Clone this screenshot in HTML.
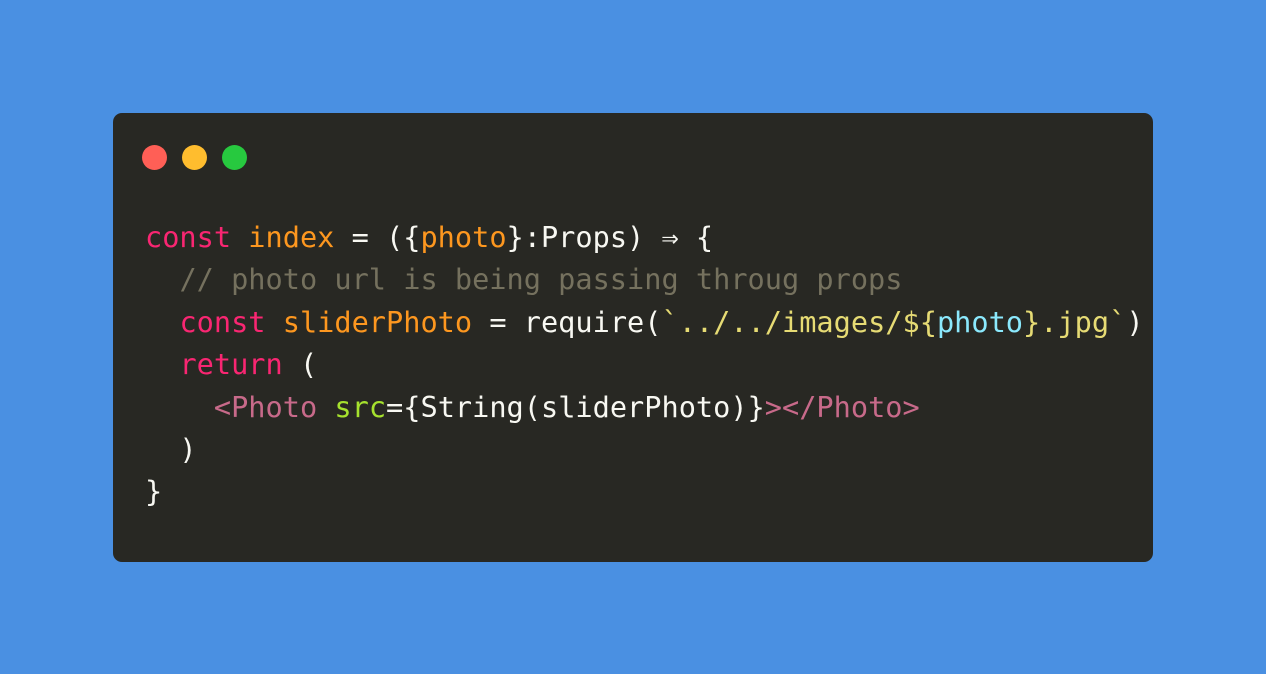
<!DOCTYPE html>
<html><head><style>
html,body{margin:0;padding:0;width:1266px;height:674px;background:#4a90e2;overflow:hidden}
.win{position:absolute;left:113px;top:113px;width:1040px;height:449px;background:#282823;border-radius:9px}
.dot{position:absolute;top:145px;width:25px;height:25px;border-radius:50%}
pre{position:absolute;left:145px;top:216px;margin:0;font-family:"DejaVu Sans Mono","Liberation Mono",monospace;font-size:28.6px;line-height:42.4px;color:#f8f8f2;letter-spacing:0}
.k{color:#f92672}.o{color:#fd971f}.c{color:#75715e}.s{color:#e6db74}.cy{color:#8be9fd}.t{color:#c86a8a}.g{color:#a6e22e}
</style></head><body>
<div class="win"></div>
<div class="dot" style="left:142px;background:#ff5f56"></div>
<div class="dot" style="left:182px;background:#ffbd2e"></div>
<div class="dot" style="left:222px;background:#27c93f"></div>
<pre><span class="k">const</span> <span class="o">index</span> = ({<span class="o">photo</span>}:Props) ⇒ {
  <span class="c">// photo url is being passing throug props</span>
  <span class="k">const</span> <span class="o">sliderPhoto</span> = require(<span class="s">`../../images/${</span><span class="cy">photo</span><span class="s">}.jpg`</span>)
  <span class="k">return</span> (
    <span class="t">&lt;Photo</span> <span class="g">src</span>={String(sliderPhoto)}<span class="t">&gt;&lt;/Photo&gt;</span>
  )
}</pre>
</body></html>
